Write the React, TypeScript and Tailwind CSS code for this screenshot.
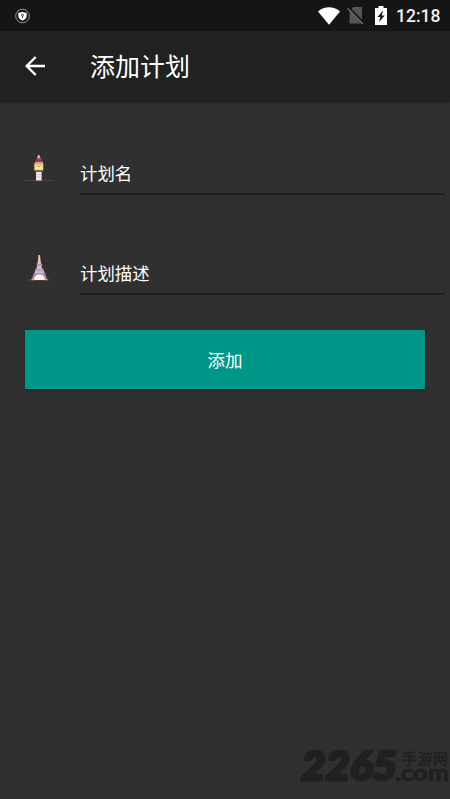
import { type FC, type ReactNode } from "react";

interface FieldProps {
  icon: ReactNode;
  label: string;
}

const ShieldIcon: FC = () => (
  <svg className="h-4 w-4" fill="none" viewBox="0 0 16 16">
    <circle cx="7.500" cy="8" r="6.800" stroke="#a5a5a5" strokeWidth="0.9" />
    <path d="M7.500 3.800c1.300.7 2.700 1 4.200 1v3.200c0 2-1.700 3.600-4.200 4.800-2.500-1.200-4.200-2.800-4.200-4.800V4.800c1.500 0 2.900-.3 4.200-1Z" fill="#fff" />
    <circle cx="7.500" cy="7" r="1" stroke="#333" strokeWidth="0.8" />
    <path d="M7.500 8v2.200" stroke="#333" strokeWidth="0.9" />
  </svg>
);

const WifiIcon: FC = () => (
  <svg className="h-[18px] w-[22px]" viewBox="0 0 22 18">
    <path d="M0 4.400C6.500-1 15.500-1 22 4.400L11 17.800Z" fill="#fff" />
  </svg>
);

const NoSimIcon: FC = () => (
  <svg className="h-[19px] w-[18px]" viewBox="0 0 18 19">
    <path d="M6.200 1H15v16.500H2.500V5Z" fill="#555" />
    <path d="M1.200 1.200 17 17" stroke="#151515" strokeWidth="2" />
    <path d="M.6 2.400 16 18" stroke="#626262" strokeWidth="1.500" />
  </svg>
);

const BatteryIcon: FC = () => (
  <svg className="h-[19px] w-3" viewBox="0 0 12 19">
    <path d="M3.500 0h5v2H12v17H0V2h3.500Z" fill="#fff" />
    <path d="M8.200 4.600 2.400 11h3L4 16.300 9.700 9.500H6.700Z" fill="#151515" />
  </svg>
);

const BackIcon: FC = () => (
  <svg className="h-5 w-5" fill="none" stroke="#fff" strokeWidth="2.400" viewBox="0 0 20 20">
    <path d="M20 10H2M10.700 1 1.700 10l9 9" />
  </svg>
);

const ClockTowerIcon: FC = () => (
  <svg className="h-7 w-7" viewBox="0 0 28 28">
    <path d="M0 26.500h28" stroke="#713b3c" strokeWidth="0.8" />
    <path d="M13 1h1.500l1 3.500h-3.500Z" fill="#e8b5ad" />
    <path d="M12 4h4l1 3h-6Z" fill="#a34b58" />
    <path d="M10.500 6h6.600v1.800h-6.600Z" fill="#873f4b" />
    <path d="M10 7.800h8v1.500h-8Z" fill="#d39b90" />
    <path d="M9.300 9.300h9v7.200h-9Z" fill="#f4d582" />
    <path d="M11.500 11.200h1.500v2h2l1.500-2v3.300h-5Z" fill="#fff5d8" />
    <path d="m11.500 10.800 2 2.400 2.500-2" fill="none" stroke="#a67c62" strokeWidth="0.7" />
    <path d="M10.500 16.500h6.700v1.500h-6.700Z" fill="#7f5166" />
    <path d="M11 18h5.600v8.500H11Z" fill="#f3e4ed" />
    <path d="M11 20.500h5.600M11 23h5.600" stroke="#c7aabf" strokeWidth="0.6" />
  </svg>
);

const EiffelIcon: FC = () => (
  <svg className="h-7 w-7" viewBox="0 0 28 28">
    <path d="M2 26h24" stroke="#754039" strokeWidth="0.8" />
    <path d="M13.500 1H15l.9 8.500h-3.200Z" fill="#f0c2b6" />
    <path d="M12.700 8h3.200l1.100 7h-5.500Z" fill="#dcc0cd" />
    <path d="M11.800 10.300h5.400V12h-5.400Z" fill="#b995ae" />
    <path d="M10.700 14.500h7.500l1.800 5.500H9Z" fill="#b7a3c0" />
    <path d="M10 17.500h9v1.200h-9Z" fill="#d8c7d8" />
    <path d="M8.800 19.500h11.500L22.300 26H6.500Z" fill="#a98aaa" />
    <path d="M8.800 26c.4-3.800 2.500-5.400 5.600-5.400s5.200 1.600 5.600 5.400Z" fill="#fff4e5" />
    <path d="M6.500 25.700h3.200m9.600 0h3.200" stroke="#f2a45f" strokeWidth="1.300" />
  </svg>
);

const StatusBar: FC = () => (
  <div className="flex h-[31px] items-center bg-[#151515] pl-[15px] pr-[10px]">
    <ShieldIcon />
    <div className="ml-auto flex items-center">
      <WifiIcon />
      <span className="ml-[7px] flex">
        <NoSimIcon />
      </span>
      <span className="ml-[10px] flex">
        <BatteryIcon />
      </span>
      <span className="ml-[9px] w-[44px] whitespace-nowrap pt-[3px] font-[Roboto,sans-serif] text-[17.500px] font-medium leading-none text-[#f2f2f2]">
        12:18
      </span>
    </div>
  </div>
);

const Field: FC<FieldProps> = ({ icon, label }) => (
  <div className="flex h-[100px] pl-[25px] pr-[5px]">
    <div className="w-[55px] shrink-0 pt-[2px]">{icon}</div>
    <div className="h-[43px] flex-1 border-b-2 border-[#1f1f1f] pt-[9px] text-[17.400px] leading-6">
      {label}
    </div>
  </div>
);

const Watermark: FC = () => (
  <svg
    aria-hidden="true"
    className="absolute bottom-0 right-0 h-16 w-40"
    fill="#202020"
    stroke="#202020"
    strokeLinejoin="round"
    viewBox="0 0 160 64"
  >
    <text
      className="font-[Lato,sans-serif] text-[40px] font-black italic"
      lengthAdjust="spacingAndGlyphs"
      strokeWidth="3"
      textLength="96"
      x="11"
      y="45"
    >
      2265
    </text>
    <text
      className="font-['Noto_Sans_CJK_SC',sans-serif] text-[15px] font-medium"
      strokeWidth="0.3"
      textLength="46"
      x="112"
      y="29"
    >
      手游网
    </text>
    <text
      className="font-[Lato,sans-serif] text-[22px] font-bold"
      lengthAdjust="spacingAndGlyphs"
      strokeWidth="1"
      textLength="54"
      x="105"
      y="46"
    >
      .com
    </text>
  </svg>
);

export default function App() {
  return (
    <main className="relative h-[799px] w-[450px] overflow-hidden bg-[#303030] font-['Noto_Sans_CJK_SC',sans-serif] text-white">
      <StatusBar />
      <header className="flex h-[71px] items-center bg-[#212121] pb-0.5 pl-[25px] shadow-[0_1px_2px_rgba(0,0,0,0.3)]">
        <button aria-label="返回" type="button">
          <BackIcon />
        </button>
        <h1 className="ml-[45px] text-[25px] leading-none">添加计划</h1>
      </header>

      <form className="pt-[50px]" onSubmit={(e) => e.preventDefault()}>
        <Field icon={<ClockTowerIcon />} label="计划名" />
        <Field icon={<EiffelIcon />} label="计划描述" />
        <button
          className="mx-[25px] -mt-[22px] block h-[59px] w-[400px] bg-[#009688] pt-px text-[17.500px] shadow-[0_1px_2px_rgba(0,0,0,0.4)]"
          type="submit"
        >
          添加
        </button>
      </form>

      <Watermark />
    </main>
  );
}
